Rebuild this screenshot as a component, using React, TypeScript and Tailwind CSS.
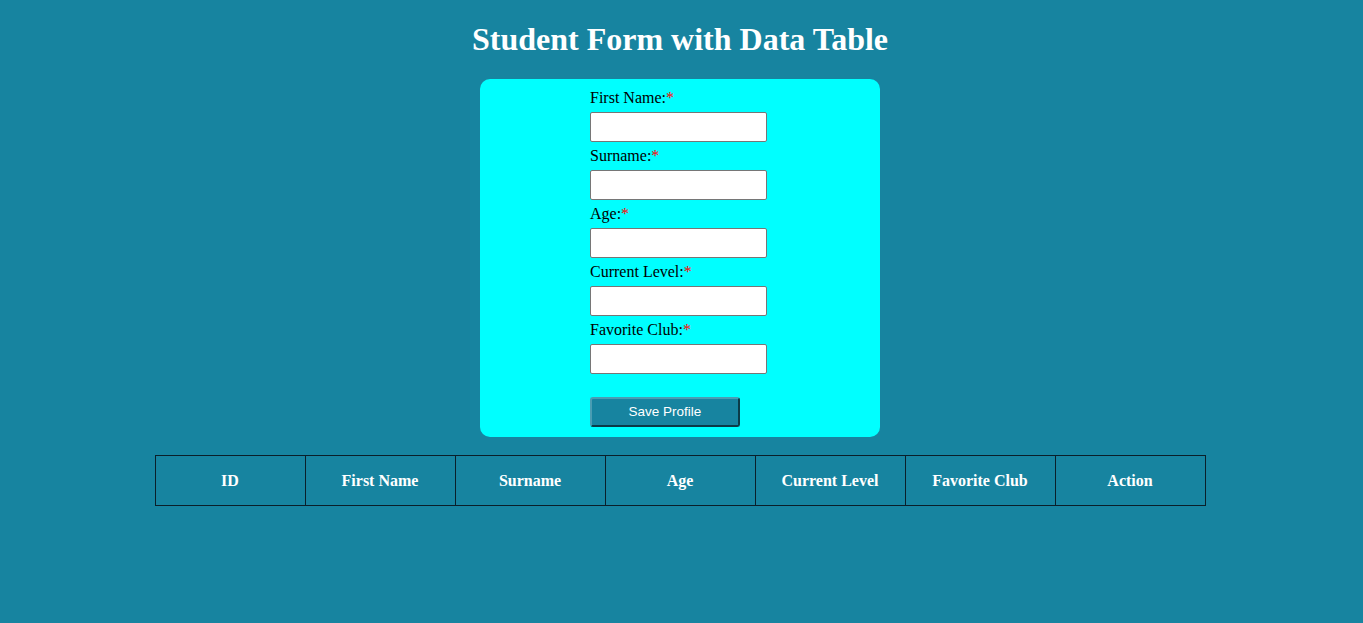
const FIELDS = ['First Name', 'Surname', 'Age', 'Current Level', 'Favorite Club'];
const COLS = ['ID', 'First Name', 'Surname', 'Age', 'Current Level', 'Favorite Club', 'Action'];

export default function App() {
  return (
    <div className="min-h-[623px] bg-[#1784a0] font-['Liberation_Serif',serif] text-black">
      <div className="w-[1360px] pb-[20px]">
        <h1 className="pt-[21px] text-center text-[32px] leading-[37px] font-bold text-white">Student Form with Data Table</h1>
        <div className="mx-auto mt-[21px] w-[400px] rounded-[10px] bg-[#00ffff] pt-[10px] pb-[10px] pl-[110px]">
          {FIELDS.map((f) => (
            <div key={f} className="mb-[5px]">
              <label className="block text-[16px] leading-[18px] mb-[5px]">
                {f}:<span className="text-[#ff0000]">*</span>
              </label>
              <input type="text" className="block h-[30px] w-[177px] rounded-[2px] border border-[#767676] bg-white" />
            </div>
          ))}
          <button className="mt-[18px] h-[30px] w-[150px] rounded-[3px] border-2 border-t-[#4a9db3] border-l-[#4a9db3] border-r-[#0b3b48] border-b-[#0b3b48] bg-[#1784a0] font-['Liberation_Sans',sans-serif] text-[13.5px] text-white">
            Save Profile
          </button>
        </div>
        <table className="mx-auto mt-[18px] w-[1051px] border-collapse">
          <thead>
            <tr>
              {COLS.map((c) => (
                <th key={c} className="h-[50px] w-[150px] border border-[#0a1f2a] text-center text-[16px] font-bold text-white">{c}</th>
              ))}
            </tr>
          </thead>
          <tbody></tbody>
        </table>
      </div>
    </div>
  );
}
